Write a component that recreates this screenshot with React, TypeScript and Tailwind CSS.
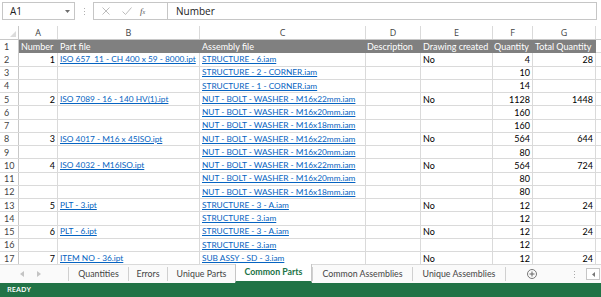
import React from "react";

type Row = {
  n?: string;
  part?: string;
  asm?: string;
  drw?: string;
  q?: string;
  tq?: string;
};

const rows: Row[] = [
  { n: "1", part: "ISO 657  11 - CH 400 x 59 - 8000.ipt", asm: "STRUCTURE - 6.iam", drw: "No", q: "4", tq: "28" },
  { asm: "STRUCTURE - 2 - CORNER.iam", q: "10" },
  { asm: "STRUCTURE - 1 - CORNER.iam", q: "14" },
  { n: "2", part: "ISO 7089 - 16 - 140 HV(1).ipt", asm: "NUT - BOLT - WASHER - M16x22mm.iam", drw: "No", q: "1128", tq: "1448" },
  { asm: "NUT - BOLT - WASHER - M16x20mm.iam", q: "160" },
  { asm: "NUT - BOLT - WASHER - M16x18mm.iam", q: "160" },
  { n: "3", part: "ISO 4017 - M16 x 45ISO.ipt", asm: "NUT - BOLT - WASHER - M16x22mm.iam", drw: "No", q: "564", tq: "644" },
  { asm: "NUT - BOLT - WASHER - M16x20mm.iam", q: "80" },
  { n: "4", part: "ISO 4032 - M16ISO.ipt", asm: "NUT - BOLT - WASHER - M16x22mm.iam", drw: "No", q: "564", tq: "724" },
  { asm: "NUT - BOLT - WASHER - M16x20mm.iam", q: "80" },
  { asm: "NUT - BOLT - WASHER - M16x18mm.iam", q: "80" },
  { n: "5", part: "PLT - 3.ipt", asm: "STRUCTURE - 3 - A.iam", drw: "No", q: "12", tq: "24" },
  { asm: "STRUCTURE - 3.iam", q: "12" },
  { n: "6", part: "PLT - 6.ipt", asm: "STRUCTURE - 3 - A.iam", drw: "No", q: "12", tq: "24" },
  { asm: "STRUCTURE - 3.iam", q: "12" },
  { n: "7", part: "ITEM NO - 36.ipt", asm: "SUB ASSY - SD - 3.iam", drw: "No", q: "12", tq: "24" },
];

const cell = "h-full border-r border-[#dadada] overflow-hidden whitespace-pre flex items-center";

function RowHead({ n }: { n: number }) {
  return (
    <div className="w-[19px] shrink-0 h-full border-r border-[#c8c8c8] bg-white flex items-center pl-[4px] text-[#444] text-[9px]">
      {n}
    </div>
  );
}

function Link({ t }: { t?: string }) {
  if (!t) return null;
  return <span className="text-[#0563c1] underline decoration-[#0563c1] underline-offset-[1px]">{t}</span>;
}

const tabs = [
  { t: "Quantities", w: "w-[60px]" },
  { t: "Errors", w: "w-[39px]" },
  { t: "Unique Parts", w: "w-[68px]" },
  { t: "Common Parts", w: "w-[77px]", active: true },
  { t: "Common Assemblies", w: "w-[100px]" },
  { t: "Unique Assemblies", w: "w-[93px]" },
];

export default function App() {
  return (
    <div className="w-[601px] h-[297px] bg-white overflow-hidden flex flex-col font-['Lato',sans-serif] text-[8.3px] leading-none text-black">
      {/* Formula bar */}
      <div className="h-[24px] shrink-0 flex items-start pt-[2px] pl-[2px] bg-white">
        <div className="w-[73px] h-[18px] border border-[#c6c6c6] flex items-center justify-between pl-[7px] pr-[4px] text-[10px] text-[#222] font-['Open_Sans',sans-serif]">
          <span>A1</span>
          <svg width="5" height="3" viewBox="0 0 5 3"><path d="M0 0h5L2.5 3z" fill="#6d6d6d" /></svg>
        </div>
        <div className="w-[18px] h-[18px] flex flex-col items-center justify-center gap-[2px]">
          <div className="w-[1px] h-[1px] bg-[#b0b0b0]" />
          <div className="w-[1px] h-[1px] bg-[#b0b0b0]" />
          <div className="w-[1px] h-[1px] bg-[#b0b0b0]" />
        </div>
        <div className="flex-1 h-[18px] border border-[#c6c6c6] flex mr-[4px]">
          <div className="w-[74px] h-full flex items-center border-r border-[#c6c6c6]">
            <svg className="ml-[8px]" width="8" height="8" viewBox="0 0 8 8"><path d="M0.5 0.5l7 7M7.5 0.5l-7 7" stroke="#bdbdbd" strokeWidth="1" /></svg>
            <svg className="ml-[12px]" width="10" height="8" viewBox="0 0 10 8"><path d="M0.5 4.5l3 3L9.5 0.5" stroke="#bdbdbd" strokeWidth="1" fill="none" /></svg>
            <span className="ml-[8px] text-[9px] italic text-[#555] font-['Liberation_Serif',serif]">f<span className="text-[6px]">x</span></span>
          </div>
          <div className="flex-1 flex items-center pl-[8px] text-[10px] text-[#222] font-['Open_Sans',sans-serif]">Number</div>
        </div>
      </div>
      <div className="h-[2px] shrink-0 bg-white" />
      {/* Column headers */}
      <div className="h-[14px] shrink-0 flex bg-white border-b border-[#c8c8c8] text-[#444] text-[9px] font-['Open_Sans',sans-serif]">
        <div className="w-[19px] shrink-0 h-full border-r border-[#c8c8c8] relative">
          <svg className="absolute right-[2px] bottom-[2px]" width="6" height="6" viewBox="0 0 6 6"><path d="M6 0v6H0z" fill="#dcdcdc" /></svg>
        </div>
        <div className="w-[39px] shrink-0 border-r border-[#dadada] flex items-center justify-center">A</div>
        <div className="w-[142px] shrink-0 border-r border-[#dadada] flex items-center justify-center">B</div>
        <div className="w-[166px] shrink-0 border-r border-[#dadada] flex items-center justify-center">C</div>
        <div className="w-[55px] shrink-0 border-r border-[#dadada] flex items-center justify-center">D</div>
        <div className="w-[72px] shrink-0 border-r border-[#dadada] flex items-center justify-center">E</div>
        <div className="w-[40px] shrink-0 border-r border-[#dadada] flex items-center justify-center">F</div>
        <div className="w-[63px] shrink-0 border-r border-[#dadada] flex items-center justify-center">G</div>
        <div className="flex-1" />
      </div>
      {/* Header row 1 */}
      <div className="h-[13.25px] shrink-0 flex text-[9px]">
        <RowHead n={1} />
        <div className="flex bg-[#808080] text-white h-full">
          <div className="w-[39px] shrink-0 flex items-center pl-[2px] whitespace-nowrap">Number</div>
          <div className="w-[142px] shrink-0 flex items-center pl-[2px] whitespace-nowrap">Part file</div>
          <div className="w-[166px] shrink-0 flex items-center pl-[2px] whitespace-nowrap">Assembly file</div>
          <div className="w-[55px] shrink-0 flex items-center pl-[1px] whitespace-nowrap">Description</div>
          <div className="w-[72px] shrink-0 flex items-center pl-[2px] whitespace-nowrap">Drawing created</div>
          <div className="w-[40px] shrink-0 flex items-center pl-[1px] whitespace-nowrap">Quantity</div>
          <div className="w-[63px] shrink-0 flex items-center pl-[2px] whitespace-nowrap">Total Quantity</div>
        </div>
        <div className="flex-1 border-b border-[#dadada]" />
      </div>
      {/* Data rows */}
      {rows.map((r, i) => (
        <div key={i} className="h-[13.25px] shrink-0 flex border-b border-[#dadada]">
          <RowHead n={i + 2} />
          <div className={`${cell} w-[39px] shrink-0 justify-end pr-[2px] text-[9px]`}>{r.n}</div>
          <div className={`${cell} w-[142px] shrink-0 pl-[2px]`}><Link t={r.part} /></div>
          <div className={`${cell} w-[166px] shrink-0 pl-[2px]`}><Link t={r.asm} /></div>
          <div className={`${cell} w-[55px] shrink-0`} />
          <div className={`${cell} w-[72px] shrink-0 pl-[2px] text-[9px]`}>{r.drw}</div>
          <div className={`${cell} w-[40px] shrink-0 justify-end pr-[2px] text-[9px]`}>{r.q}</div>
          <div className={`${cell} w-[63px] shrink-0 justify-end pr-[2px] text-[9px]`}>{r.tq}</div>
          <div className="flex-1" />
        </div>
      ))}
      {/* Tab bar */}
      <div className="flex-1 flex items-stretch bg-[#fafafa] text-[#444] text-[8.8px] font-['Lato',sans-serif]">
        <div className="w-[68px] shrink-0 flex items-center pl-[20px] gap-[13px] text-[#c4c4c4]">
          <svg width="4" height="6" viewBox="0 0 4 6"><path d="M4 0v6L0 3z" fill="#c4c4c4" /></svg>
          <svg width="4" height="6" viewBox="0 0 4 6"><path d="M0 0v6l4-3z" fill="#c4c4c4" /></svg>
        </div>
        {tabs.map((t) =>
          t.active ? (
            <div key={t.t} className={`${t.w} shrink-0 bg-white border-l border-r border-[#c6c6c6] border-b-2 border-b-[#217346] flex items-center justify-center font-bold text-[#217346] -mt-[1px] whitespace-nowrap`}>
              {t.t}
            </div>
          ) : (
            <div key={t.t} className={`${t.w} shrink-0 flex items-center justify-center border-l border-[#d0d0d0] my-[2px] whitespace-nowrap`}>
              {t.t}
            </div>
          )
        )}
        <div className="w-[1px] bg-[#d0d0d0] my-[2px]" />
        <div className="flex-1 flex items-center">
          <div className="ml-[21px] w-[10px] h-[10px] rounded-full border border-[#777] flex items-center justify-center">
            <svg width="6" height="6" viewBox="0 0 6 6"><path d="M3 0.5v5M0.5 3h5" stroke="#666" strokeWidth="1" /></svg>
          </div>
          <div className="ml-[37px] flex flex-col gap-[2px]">
            <div className="w-[1px] h-[1px] bg-[#aaa]" />
            <div className="w-[1px] h-[1px] bg-[#aaa]" />
            <div className="w-[1px] h-[1px] bg-[#aaa]" />
          </div>
          <div className="ml-[11px] w-[14px] h-[12px] border border-[#c6c6c6] bg-white flex items-center justify-center">
            <svg width="3" height="5" viewBox="0 0 3 5"><path d="M3 0v5L0 2.5z" fill="#777" /></svg>
          </div>
        </div>
      </div>
      {/* Status bar */}
      <div className="h-[14px] shrink-0 bg-[#217346] flex items-center pl-[7px] text-white text-[7.5px] font-semibold font-['Open_Sans',sans-serif]">
        READY
      </div>
    </div>
  );
}
